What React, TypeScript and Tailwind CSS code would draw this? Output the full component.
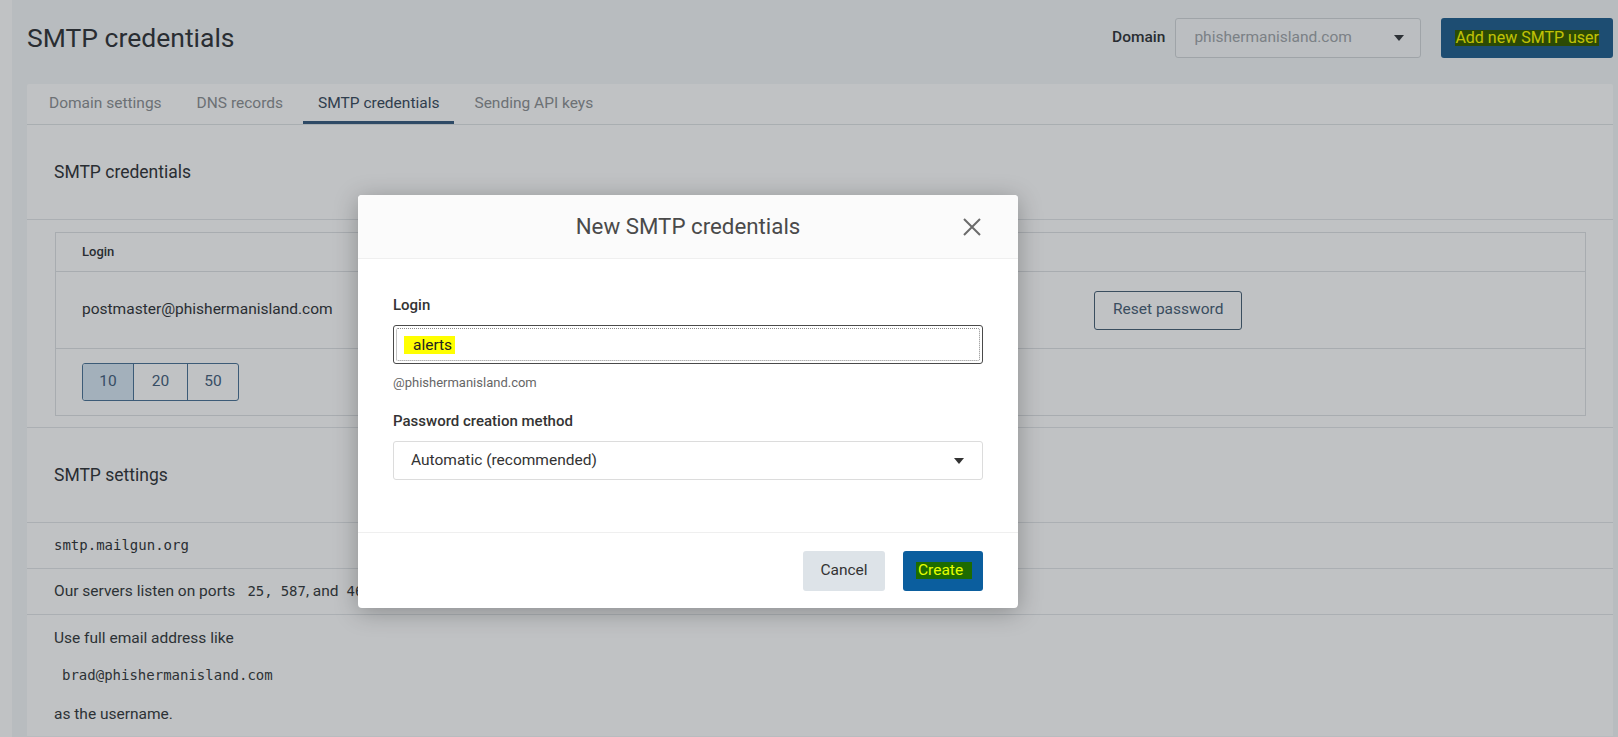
import React from 'react';

const tabs = ['Domain settings', 'DNS records', 'SMTP credentials', 'Sending API keys'];

const Caret: React.FC<{ className?: string }> = ({ className }) => (
  <svg width="10" height="6" viewBox="0 0 10 6" className={className}>
    <path d="M0 0h10L5 6z" fill="currentColor" />
  </svg>
);

const CloseIcon: React.FC = () => (
  <svg width="20" height="20" viewBox="0 0 20 20" className="text-[#6b6b6b]">
    <path d="M2 2l16 16M18 2L2 18" stroke="currentColor" strokeWidth="2" />
  </svg>
);

const NewCredentialsModal: React.FC = () => (
  <div className="absolute left-[358px] top-[195px] w-[660px] bg-white rounded-[4px] overflow-hidden shadow-[0_4px_24px_rgba(0,0,0,0.28)]">
    <div className="h-[64px] bg-[#fbfbfb] border-b border-[#efefef] grid grid-cols-[1fr_auto_1fr] items-center px-[36px]">
      <div />
      <h2 className="text-[22.3px] text-[#4a4a4a]">New SMTP credentials</h2>
      <button className="justify-self-end">
        <CloseIcon />
      </button>
    </div>

    <div className="px-[35px] pt-[36px] pb-[52px]">
      <label className="block text-[15px] leading-[20px] font-medium text-[#333]">Login</label>
      <div className="mt-[10px] h-[39px] border border-[#4a4a4a] rounded-[3px] p-[2px]">
        <div className="h-full border border-dotted border-[#8a8a8a] rounded-[2px] flex items-center pl-[7px]">
          <span className="bg-[#ffff00] pl-[9px] pr-[3px] text-[15.5px] leading-[18px] text-[#222]">alerts</span>
        </div>
      </div>
      <p className="mt-[10px] text-[13px] leading-[18px] text-[#666]">@phishermanisland.com</p>

      <label className="block mt-[19px] text-[15px] leading-[20px] font-medium text-[#333]">
        Password creation method
      </label>
      <div className="mt-[10px] h-[39px] border border-[#dcdcdc] rounded-[3px] flex items-center justify-between pl-[17px] pr-[18px]">
        <span className="text-[15.5px] text-[#333]">Automatic (recommended)</span>
        <Caret className="text-[#333]" />
      </div>
    </div>

    <div className="h-[76px] border-t border-[#efefef] flex items-center justify-end gap-[18px] px-[35px]">
      <button className="w-[82px] h-[40px] bg-[#dde3e8] rounded-[3px] text-[15.5px] text-[#333]">Cancel</button>
      <button className="w-[80px] h-[40px] bg-[#0b5e9e] rounded-[3px] flex items-center pl-[13px]">
        <span className="bg-[#1d6b00] pl-[2px] pr-[9px] text-[15.5px] leading-[17px] text-[#e6ff00]">Create</span>
      </button>
    </div>
  </div>
);

const App: React.FC = () => {
  return (
    <div className="relative w-[1618px] h-[737px] overflow-hidden flex font-['Roboto',sans-serif] text-[#3a3e42]">
      <div className="w-[12px] bg-white shrink-0" />

      <div className="flex-1 bg-[#f4f7f8] pl-[15px] pr-[5px]">
        {/* page header */}
        <div className="h-[84px] pb-[8px] flex items-center justify-between">
          <h1 className="text-[26.5px] text-[#36393d]">SMTP credentials</h1>
          <div className="flex items-center">
            <span className="text-[15.5px] font-medium text-[#36393d] mr-[10px]">Domain</span>
            <div className="w-[246px] h-[40px] border border-[#d3d7da] bg-[#f9fafb] rounded-[3px] flex items-center justify-between pl-[18px] pr-[16px]">
              <span className="text-[15.5px] text-[#a3a8ac]">phishermanisland.com</span>
              <Caret className="text-[#3a3e42]" />
            </div>
            <button className="ml-[20px] h-[40px] px-[14px] bg-[#266392] rounded-[3px] flex items-center">
              <span className="bg-[#3a5f00] text-[16px] leading-[16px] text-[#ffff00]">Add new SMTP user</span>
            </button>
          </div>
        </div>

        {/* card */}
        <div className="bg-white rounded-t-[2px]">
          <div className="flex gap-[5px] pl-[7px] border-b border-[#e1e4e6]">
            {tabs.map((t) => (
              <div
                key={t}
                className={`h-[40px] pt-[3px] px-[15px] flex items-center text-[15.5px] border-b-[3px] ${
                  t === 'SMTP credentials' ? 'border-[#3c5f82] text-[#3e4f62]' : 'border-transparent text-[#909396]'
                }`}
              >
                {t}
              </div>
            ))}
          </div>

          <div className="h-[95px] px-[27px] flex items-center border-b border-[#e3e6e8]">
            <h3 className="text-[17.5px] text-[#36393d]">SMTP credentials</h3>
          </div>

          <div className="ml-[28px] mr-[27px] pt-[12px] pb-[11px]">
            <div className="border border-[#dfe2e5]">
              <div className="h-[39px] border-b border-[#dfe2e5] flex items-center pl-[26px]">
                <span className="text-[13px] font-medium text-[#36393d]">Login</span>
              </div>
              <div className="h-[77px] border-b border-[#dfe2e5] flex items-center pl-[26px]">
                <span className="w-[1012px] text-[15.5px] text-[#36393d]">postmaster@phishermanisland.com</span>
                <button className="h-[39px] px-[18px] border border-[#4d6479] rounded-[3px] text-[15.5px] text-[#4d6479]">
                  Reset password
                </button>
              </div>
              <div className="h-[66px] flex items-start pt-[14px] pl-[26px]">
                <div className="flex h-[38px] border border-[#4f7699] rounded-[3px] overflow-hidden text-[15.5px] text-[#4a6580]">
                  <div className="w-[50px] flex items-center justify-center bg-[#d8e7f3]">10</div>
                  <div className="w-[54px] flex items-center justify-center border-l border-[#4f7699]">20</div>
                  <div className="w-[51px] flex items-center justify-center border-l border-[#4f7699]">50</div>
                </div>
              </div>
            </div>
          </div>

          <div className="border-t border-[#e3e6e8]">
            <div className="h-[95px] px-[27px] flex items-center border-b border-[#e3e6e8]">
              <h3 className="text-[17.5px] text-[#36393d]">SMTP settings</h3>
            </div>
            <div className="h-[46px] px-[27px] flex items-center border-b border-[#e3e6e8]">
              <code className="font-['DejaVu_Sans_Mono',monospace] text-[14px] text-[#36393d]">smtp.mailgun.org</code>
            </div>
            <div className="h-[46px] px-[27px] flex items-center border-b border-[#e3e6e8] text-[15.5px]">
              Our servers listen on ports
              <code className="font-['DejaVu_Sans_Mono',monospace] text-[14px] pl-[12px]">25,</code>
              <code className="font-['DejaVu_Sans_Mono',monospace] text-[14px] pl-[8px]">587</code>, and
              <code className="font-['DejaVu_Sans_Mono',monospace] text-[14px] pl-[8px]">465</code>.
            </div>
            <div className="px-[27px] pt-[13px] pb-[12px] text-[15.5px] leading-[20px]">
              <p>Use full email address like</p>
              <p className="mt-[17px] pl-[8px] font-['DejaVu_Sans_Mono',monospace] text-[14px]">brad@phishermanisland.com</p>
              <p className="mt-[19px]">as the username.</p>
            </div>
          </div>
        </div>
      </div>

      {/* modal backdrop */}
      <div className="absolute inset-0 bg-[rgba(3,11,19,0.25)]" />
      <NewCredentialsModal />
    </div>
  );
};

export default App;
